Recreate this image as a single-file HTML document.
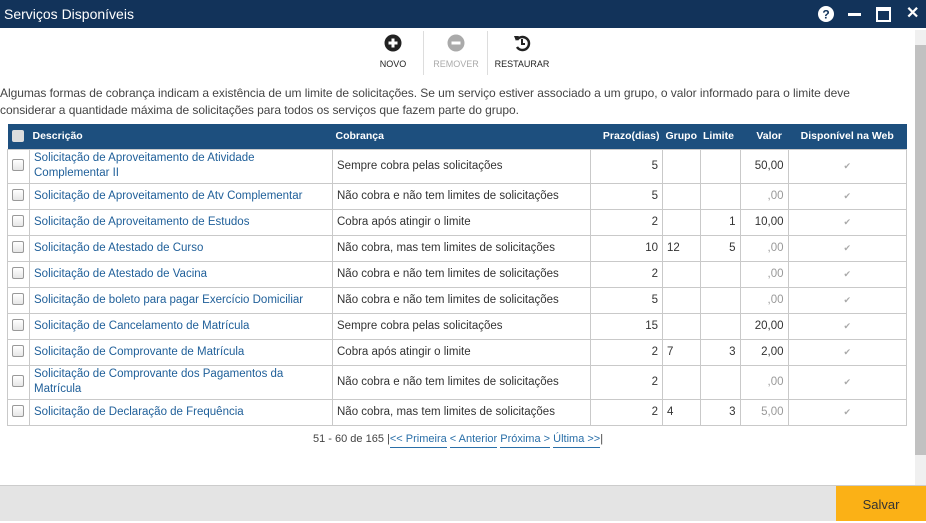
<!DOCTYPE html>
<html><head><meta charset="utf-8"><style>
*{margin:0;padding:0;box-sizing:border-box}
body{width:926px;height:521px;overflow:hidden;font-family:"Liberation Sans",sans-serif;font-size:12px;color:#333;background:#fff;position:relative}
.title{position:absolute;left:0;top:0;width:926px;height:28px;background:#12335a;color:#fff;font-size:14px;line-height:28px;padding-left:4px}
.ti{position:absolute;top:0;height:28px;color:#fff;font-weight:bold;font-size:15px;line-height:28px}
.tb{position:absolute;top:34px;text-align:center;font-size:9px;color:#222}
.tb svg{display:block;margin:0 auto 7px}
.sep{position:absolute;top:31px;width:1px;height:44px;background:#ddd}
.info{position:absolute;left:0;top:85px;width:900px;line-height:17px;color:#444;font-size:12px;letter-spacing:-0.05px}
table{position:absolute;left:7px;top:124px;width:900px;border-collapse:collapse;font-size:11.5px}
th{background:#1d4f7e;color:#fff;font-weight:bold;font-size:10.5px;height:25px;text-align:left;padding:0 3px}
td{border:1px solid #c9c9c9;padding:0 4px;height:26px;line-height:15px}
td.d{color:#1f5f99}
td.r{text-align:right}
.cb{display:inline-block;width:12px;height:12px;border:1px solid #999;border-radius:2px;background:linear-gradient(#fff,#e6e6e6);vertical-align:middle}
.ck{color:#aaa;font-size:9px;text-align:center}
.pg{position:absolute;top:433px;left:313px;font-size:11px;color:#444}
.pg a{color:#2a6fa8;text-decoration:none;border-bottom:1px solid #2a6fa8;padding-bottom:2px}
.sb{position:absolute;left:915px;top:30px;width:11px;height:455px;background:#f0f0f0}
.th{position:absolute;left:915px;top:45px;width:11px;height:410px;background:#c1c1c1}
.bot{position:absolute;left:0;top:485px;width:926px;height:36px;background:#e4e4e4;border-top:1px solid #ccc}
.save{position:absolute;left:836px;top:486px;width:90px;height:35px;background:#fbb116;color:#333;font-size:13px;text-align:center;line-height:37px}
</style></head><body>
<div class="title">Serviços Disponíveis</div>
<div class="ti" style="left:818px"><svg width="16" height="16" style="margin-top:6px" viewBox="0 0 16 16"><circle cx="8" cy="8" r="8" fill="#fff"/><text x="8" y="12.5" text-anchor="middle" font-size="12" font-weight="bold" fill="#12335a" font-family="Liberation Sans">?</text></svg></div>
<div style="position:absolute;left:848px;top:13px;width:13px;height:3px;background:#fff"></div>
<div style="position:absolute;left:876px;top:7px;width:15px;height:15px;border:2px solid #fff;border-top-width:4px"></div>
<div class="ti" style="left:906px;font-size:16px">✕</div>
<div class="tb" style="left:376px;width:34px"><svg width="18" height="18" viewBox="0 0 18 18"><circle cx="9" cy="9" r="8.5" fill="#222"/><path d="M9 4.5v9M4.5 9h9" stroke="#fff" stroke-width="3"/></svg>NOVO</div>
<div class="sep" style="left:423px"></div>
<div class="tb" style="left:432px;width:48px;color:#aaa"><svg width="18" height="18" viewBox="0 0 18 18"><circle cx="9" cy="9" r="8.5" fill="#aaa"/><path d="M4.5 9h9" stroke="#fff" stroke-width="3"/></svg>REMOVER</div>
<div class="sep" style="left:487px"></div>
<div class="tb" style="left:494px;width:56px"><svg width="18" height="18" viewBox="0 0 18 18"><path d="M4 6A6.5 6.5 0 1 1 4 13" fill="none" stroke="#222" stroke-width="2.5"/><path d="M1 2l5 0-3 5z" fill="#222"/><path d="M9 5v5h3" fill="none" stroke="#222" stroke-width="2"/></svg>RESTAURAR</div>
<div class="info">Algumas formas de cobrança indicam a existência de um limite de solicitações. Se um serviço estiver associado a um grupo, o valor informado para o limite deve considerar a quantidade máxima de solicitações para todos os serviços que fazem parte do grupo.</div>
<table>
<tr><th style="width:22px;padding-left:4px"><span class="cb" style="background:#ddd;border-color:#ddd"></span></th><th style="width:303px">Descrição</th><th style="width:258px">Cobrança</th><th style="width:72px;text-align:right">Prazo(dias)</th><th style="width:35px">Grupo</th><th style="width:40px">Limite</th><th style="width:48px;text-align:right;padding-right:6px">Valor</th><th style="text-align:center">Disponível na Web</th></tr>
<tr style="height:34px"><td><span class="cb"></span></td><td class="d">Solicitação de Aproveitamento de Atividade Complementar II</td><td>Sempre cobra pelas solicitações</td><td class="r">5</td><td></td><td></td><td class="r">50,00</td><td class="ck">✔</td></tr>
<tr><td><span class="cb"></span></td><td class="d">Solicitação de Aproveitamento de Atv Complementar</td><td>Não cobra e não tem limites de solicitações</td><td class="r">5</td><td></td><td></td><td class="r" style="color:#999">,00</td><td class="ck">✔</td></tr>
<tr><td><span class="cb"></span></td><td class="d">Solicitação de Aproveitamento de Estudos</td><td>Cobra após atingir o limite</td><td class="r">2</td><td></td><td class="r">1</td><td class="r">10,00</td><td class="ck">✔</td></tr>
<tr><td><span class="cb"></span></td><td class="d">Solicitação de Atestado de Curso</td><td>Não cobra, mas tem limites de solicitações</td><td class="r">10</td><td>12</td><td class="r">5</td><td class="r" style="color:#999">,00</td><td class="ck">✔</td></tr>
<tr><td><span class="cb"></span></td><td class="d">Solicitação de Atestado de Vacina</td><td>Não cobra e não tem limites de solicitações</td><td class="r">2</td><td></td><td></td><td class="r" style="color:#999">,00</td><td class="ck">✔</td></tr>
<tr><td><span class="cb"></span></td><td class="d">Solicitação de boleto para pagar Exercício Domiciliar</td><td>Não cobra e não tem limites de solicitações</td><td class="r">5</td><td></td><td></td><td class="r" style="color:#999">,00</td><td class="ck">✔</td></tr>
<tr><td><span class="cb"></span></td><td class="d">Solicitação de Cancelamento de Matrícula</td><td>Sempre cobra pelas solicitações</td><td class="r">15</td><td></td><td></td><td class="r">20,00</td><td class="ck">✔</td></tr>
<tr><td><span class="cb"></span></td><td class="d">Solicitação de Comprovante de Matrícula</td><td>Cobra após atingir o limite</td><td class="r">2</td><td>7</td><td class="r">3</td><td class="r">2,00</td><td class="ck">✔</td></tr>
<tr style="height:34px"><td><span class="cb"></span></td><td class="d">Solicitação de Comprovante dos Pagamentos da Matrícula</td><td>Não cobra e não tem limites de solicitações</td><td class="r">2</td><td></td><td></td><td class="r" style="color:#999">,00</td><td class="ck">✔</td></tr>
<tr><td><span class="cb"></span></td><td class="d">Solicitação de Declaração de Frequência</td><td>Não cobra, mas tem limites de solicitações</td><td class="r">2</td><td>4</td><td class="r">3</td><td class="r" style="color:#999">5,00</td><td class="ck">✔</td></tr>
</table>
<div class="pg">51 - 60 de 165 |<a>&lt;&lt; Primeira</a> <a>&lt; Anterior</a> <a>Próxima &gt;</a> <a>Última &gt;&gt;</a>|</div>
<div class="sb"></div><div class="th"></div>
<div class="bot"></div>
<div class="save">Salvar</div>
</body></html>
